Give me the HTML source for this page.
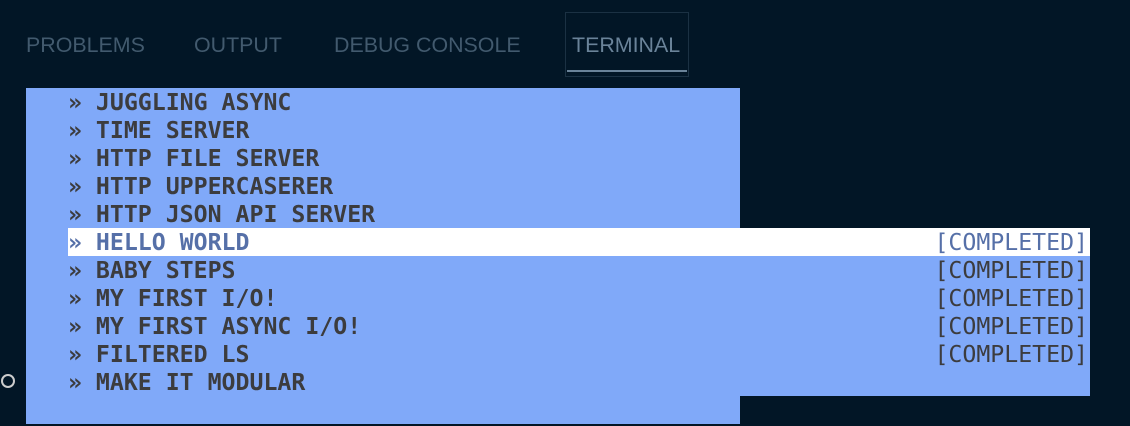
<!DOCTYPE html>
<html><head><style>
body{margin:0;width:1130px;height:426px;background:#021626;overflow:hidden;position:relative;font-family:"Liberation Sans",sans-serif}
.tab{position:absolute;top:33px;font-size:21.4px;color:#425a6e;line-height:24px}
.blk{position:absolute;background:#80a9f9}
.row{position:absolute;left:68px;height:28px;line-height:29px;font-family:"DejaVu Sans Mono","Liberation Mono",monospace;font-size:23.2px;font-weight:bold;color:#3c3c3e;white-space:pre;width:1022px}
.row .c{position:absolute;right:2px;top:0;font-weight:normal}
.hl{background:#fff;color:#5670a8}
</style></head><body>
<div class="tab" style="left:26px">PROBLEMS</div>
<div class="tab" style="left:194px">OUTPUT</div>
<div class="tab" style="left:334px">DEBUG CONSOLE</div>
<div style="position:absolute;left:565px;top:12px;width:124px;height:65px;border:1px solid #1b3143;box-sizing:border-box"></div>
<div class="tab" style="left:572px;color:#6a8399">TERMINAL</div>
<div style="position:absolute;left:567px;top:70px;width:120px;height:2px;background:#6a8399"></div>
<div class="blk" style="left:26px;top:88px;width:714px;height:336px"></div>
<div class="blk" style="left:740px;top:228px;width:350px;height:168px"></div>
<div class="row" style="top:88px">» JUGGLING ASYNC</div>
<div class="row" style="top:116px">» TIME SERVER</div>
<div class="row" style="top:144px">» HTTP FILE SERVER</div>
<div class="row" style="top:172px">» HTTP UPPERCASERER</div>
<div class="row" style="top:200px">» HTTP JSON API SERVER</div>
<div class="row hl" style="top:228px">» HELLO WORLD<span class="c">[COMPLETED]</span></div>
<div class="row" style="top:256px">» BABY STEPS<span class="c">[COMPLETED]</span></div>
<div class="row" style="top:284px">» MY FIRST I/O!<span class="c">[COMPLETED]</span></div>
<div class="row" style="top:312px">» MY FIRST ASYNC I/O!<span class="c">[COMPLETED]</span></div>
<div class="row" style="top:340px">» FILTERED LS<span class="c">[COMPLETED]</span></div>
<div class="row" style="top:368px">» MAKE IT MODULAR</div>
<div style="position:absolute;left:1px;top:374px;border:2.5px solid #ccc;border-radius:50%;box-sizing:border-box;width:14px;height:14px"></div>
</body></html>
